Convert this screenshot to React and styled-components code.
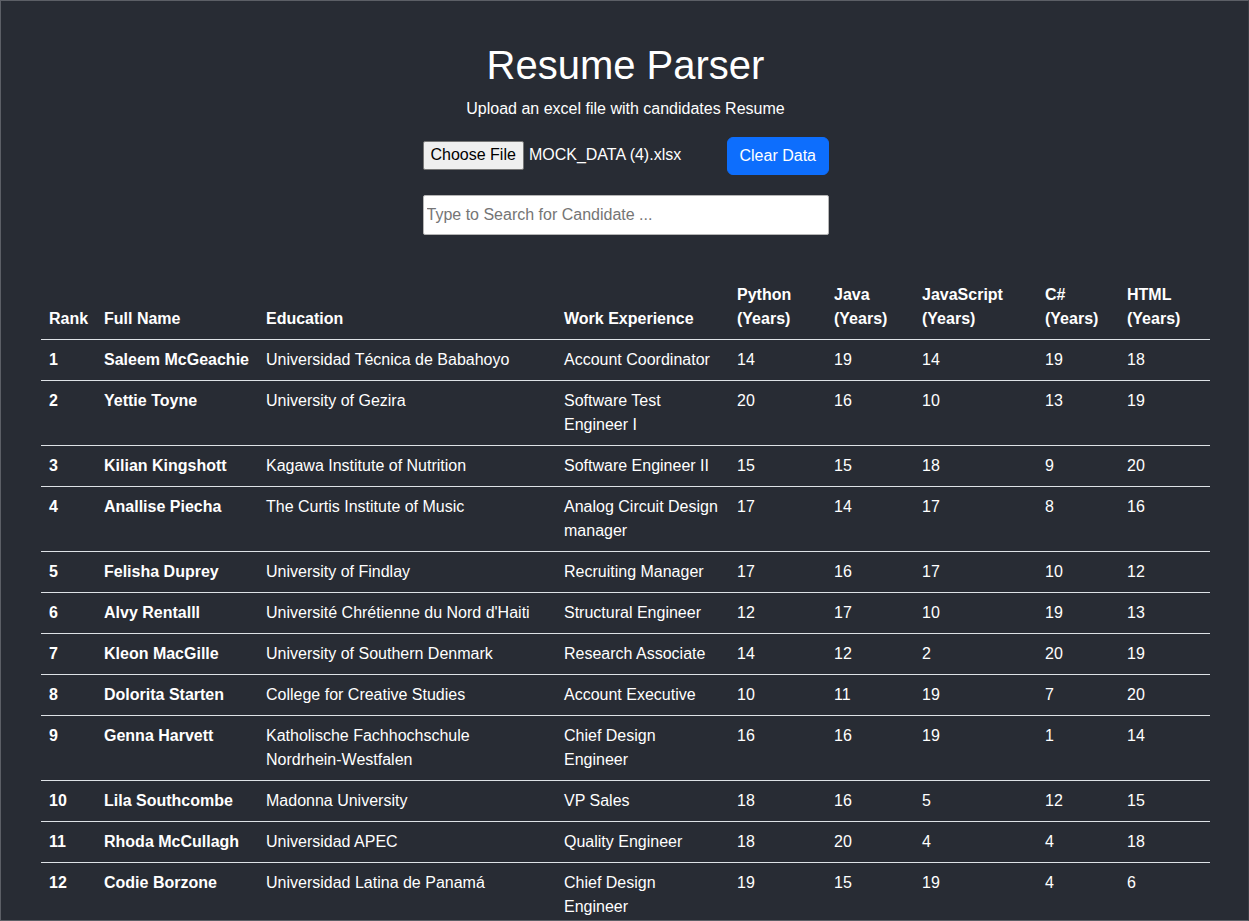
import React from 'react';
import styled, { createGlobalStyle } from 'styled-components';

const GlobalStyle = createGlobalStyle`
    * { box-sizing: border-box; }
    html, body {
        margin: 0;
        padding: 0;
        background: #282c34;
    }
    body {
        font-family: "Liberation Sans", Arial, sans-serif;
        font-size: 16px;
        line-height: 24px;
        color: #fff;
    }
`;

// frame of the captured window
const Frame = styled.div`
    position: fixed;
    inset: 0;
    border: 1px solid #5c5f66;
    border-right-color: #3a3d44;
    pointer-events: none;
`;

const Page = styled.div`
    min-height: 100vh;
    padding: 41px 39px 0 41px;
    display: flex;
    flex-direction: column;
    align-items: center;
`;

const Title = styled.h1`
    margin: 0;
    font-size: 40px;
    line-height: 48px;
    font-weight: 400;
`;

const Subtitle = styled.p`
    margin: 8px 0 0;
    font-size: 16px;
    line-height: 24px;
`;

const UploadRow = styled.div`
    margin-top: 16px;
    width: 406px;
    display: flex;
    align-items: center;
    justify-content: space-between;
`;

const FilePicker = styled.div`
    display: flex;
    align-items: center;
    gap: 5px;
    margin-top: -2px;
`;

const ChooseButton = styled.button`
    font-family: "Liberation Sans", Arial, sans-serif;
    font-size: 16px;
    line-height: 20px;
    padding: 3px 7px;
    height: 29px;
    background: #efefef;
    color: #000;
    border: 1px solid #767676;
    border-radius: 2px;
    white-space: nowrap;
`;

const FileName = styled.span`
    font-size: 16px;
    white-space: nowrap;
`;

const ClearButton = styled.button`
    flex-shrink: 0;
    font-family: "Liberation Sans", Arial, sans-serif;
    font-size: 16px;
    line-height: 24px;
    padding: 6px 12px;
    width: 102px;
    height: 38px;
    color: #fff;
    background: #0d6efd;
    border: 1px solid #0d6efd;
    border-radius: 6px;
    white-space: nowrap;
`;

const SearchInput = styled.input`
    margin-top: 20px;
    width: 406px;
    height: 40px;
    padding: 0 3px;
    font-family: "Liberation Sans", Arial, sans-serif;
    font-size: 16px;
    border: 1px solid #b5b5b5;
    border-radius: 2px;
    background: #fff;
    color: #000;
    &::placeholder { color: #757575; }
`;

const Table = styled.table`
    margin-top: 40px;
    width: 1169px;
    border-collapse: collapse;
    table-layout: fixed;
    align-self: flex-start;
`;

const HeadCell = styled.th`
    text-align: left;
    vertical-align: bottom;
    font-weight: 700;
    padding: 8px;
    border-bottom: 1px solid #dee2e6;
`;

const Cell = styled.td`
    vertical-align: top;
    padding: 8px;
    font-weight: ${({ $bold }) => ($bold ? 700 : 400)};
    border-bottom: 1px solid #dee2e6;
`;

const columns = [
    { label: 'Rank', width: 55 },
    { label: 'Full Name', width: 162 },
    { label: 'Education', width: 298 },
    { label: 'Work Experience', width: 173 },
    { label: 'Python (Years)', width: 97 },
    { label: 'Java (Years)', width: 88 },
    { label: 'JavaScript (Years)', width: 123 },
    { label: 'C# (Years)', width: 82 },
    { label: 'HTML (Years)', width: 91 },
];

const candidates = [
    ['Saleem McGeachie', 'Universidad Técnica de Babahoyo', 'Account Coordinator', 14, 19, 14, 19, 18],
    ['Yettie Toyne', 'University of Gezira', 'Software Test Engineer I', 20, 16, 10, 13, 19],
    ['Kilian Kingshott', 'Kagawa Institute of Nutrition', 'Software Engineer II', 15, 15, 18, 9, 20],
    ['Anallise Piecha', 'The Curtis Institute of Music', 'Analog Circuit Design manager', 17, 14, 17, 8, 16],
    ['Felisha Duprey', 'University of Findlay', 'Recruiting Manager', 17, 16, 17, 10, 12],
    ['Alvy Rentalll', "Université Chrétienne du Nord d'Haiti", 'Structural Engineer', 12, 17, 10, 19, 13],
    ['Kleon MacGille', 'University of Southern Denmark', 'Research Associate', 14, 12, 2, 20, 19],
    ['Dolorita Starten', 'College for Creative Studies', 'Account Executive', 10, 11, 19, 7, 20],
    ['Genna Harvett', 'Katholische Fachhochschule Nordrhein-Westfalen', 'Chief Design Engineer', 16, 16, 19, 1, 14],
    ['Lila Southcombe', 'Madonna University', 'VP Sales', 18, 16, 5, 12, 15],
    ['Rhoda McCullagh', 'Universidad APEC', 'Quality Engineer', 18, 20, 4, 4, 18],
    ['Codie Borzone', 'Universidad Latina de Panamá', 'Chief Design Engineer', 19, 15, 19, 4, 6],
];

const App = () => (

    <>
        <GlobalStyle />
        <Frame />
        <Page>
            <Title>Resume Parser</Title>
            <Subtitle>Upload an excel file with candidates Resume</Subtitle>

            <UploadRow>
                <FilePicker>
                    <ChooseButton type="button">Choose File</ChooseButton>
                    <FileName>MOCK_DATA (4).xlsx</FileName>
                </FilePicker>
                <ClearButton type="button">Clear Data</ClearButton>
            </UploadRow>

            <SearchInput type="text" placeholder="Type to Search for Candidate ..." />

            <Table>
                <colgroup>
                    {columns.map((col) => <col key={col.label} style={{ width: col.width }} />)}
                </colgroup>
                <thead>
                    <tr>
                        {columns.map((col) => <HeadCell key={col.label}>{col.label}</HeadCell>)}
                    </tr>
                </thead>
                <tbody>
                    {
                        candidates.map((row, i) => (
                            <tr key={row[0]}>
                                <Cell $bold>{i + 1}</Cell>
                                <Cell $bold>{row[0]}</Cell>
                                {row.slice(1).map((val, j) => <Cell key={j}>{val}</Cell>)}
                            </tr>
                        ))
                    }
                </tbody>
            </Table>
        </Page>
    </>

);

export default App;
